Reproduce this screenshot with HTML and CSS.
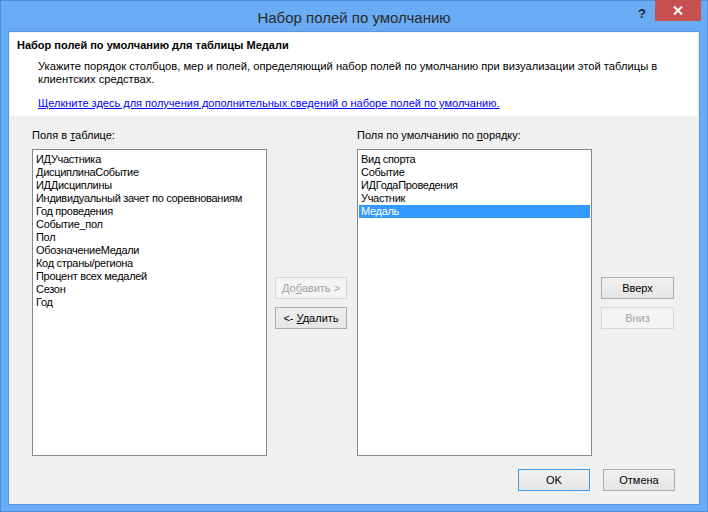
FILE: index.html
```html
<!DOCTYPE html>
<html lang="ru">
<head>
<meta charset="utf-8">
<title>Набор полей по умолчанию</title>
<link rel="stylesheet" href="styles.css">
</head>
<body>
<div class="window">
  <div class="titlebar">
    <div class="title">Набор полей по умолчанию</div>
    <div class="help">?</div>
    <div class="close"><svg width="10" height="9" viewBox="0 0 10 9"><path d="M1 0.5 L9 8.5 M9 0.5 L1 8.5" stroke="#fff" stroke-width="2"/></svg></div>
  </div>
  <div class="client">
    <div class="header">
      <div class="heading">Набор полей по умолчанию для таблицы Медали</div>
      <div class="desc">Укажите порядок столбцов, мер и полей, определяющий набор полей по умолчанию при визуализации этой таблицы в клиентских средствах.</div>
      <a class="link" href="#">Щелкните здесь для получения дополнительных сведений о наборе полей по умолчанию.</a>
    </div>
    <div class="main">
      <div class="col list-col">
        <div class="label">Поля в <u>т</u>аблице:</div>
        <div class="listbox">
          <div class="item">ИДУчастника</div>
          <div class="item">ДисциплинаСобытие</div>
          <div class="item">ИДДисциплины</div>
          <div class="item">Индивидуальный зачет по соревнованиям</div>
          <div class="item">Год проведения</div>
          <div class="item">Событие_пол</div>
          <div class="item">Пол</div>
          <div class="item">ОбозначениеМедали</div>
          <div class="item">Код страны/региона</div>
          <div class="item">Процент всех медалей</div>
          <div class="item">Сезон</div>
          <div class="item">Год</div>
        </div>
      </div>
      <div class="col btn-col mid">
        <div class="btn disabled"><span>До<u>б</u>авить &gt;</span></div>
        <div class="btn"><span>&lt;- <u>У</u>далить</span></div>
      </div>
      <div class="col list-col right">
        <div class="label">Поля по умолчанию по <u>п</u>орядку:</div>
        <div class="listbox">
          <div class="item">Вид спорта</div>
          <div class="item">Событие</div>
          <div class="item">ИДГодаПроведения</div>
          <div class="item">Участник</div>
          <div class="item selected">Медаль</div>
        </div>
      </div>
      <div class="col btn-col side">
        <div class="btn"><span>Вверх</span></div>
        <div class="btn disabled"><span>Вниз</span></div>
      </div>
    </div>
    <div class="footer">
      <div class="btn default"><span>OK</span></div>
      <div class="btn"><span>Отмена</span></div>
    </div>
  </div>
</div>
</body>
</html>
```
FILE: styles.css
```css
* { box-sizing: border-box; }
html, body { margin: 0; padding: 0; }
body {
  width: 708px;
  height: 512px;
  font-family: "Liberation Sans", Arial, sans-serif;
  font-size: 11px;
  color: #000;
  background: #fff;
}
.window {
  width: 708px;
  height: 512px;
  background: #6aacf3;
  border: 1px solid #4e8fd9;
  display: flex;
  flex-direction: column;
}
.titlebar {
  height: 30px;
  position: relative;
  display: flex;
  align-items: center;
  justify-content: center;
}
.title {
  font-size: 15px;
  color: #2b2b2b;
  margin-top: 2px;
}
.help {
  position: absolute;
  left: 637px;
  top: 5px;
  font-size: 13px;
  font-weight: bold;
  color: #222;
}
.close {
  position: absolute;
  left: 654px;
  top: -1px;
  width: 46px;
  height: 21px;
  background: #c75050;
  display: flex;
  align-items: center;
  justify-content: center;
}
.client {
  margin: 0 7px;
  height: 474px;
  background: #f0f0f0;
  border: 1px solid #5b97dd;
  padding: 1px 2px 0 1px;
  display: flex;
  flex-direction: column;
}
.header {
  background: #fff;
  height: 83px;
  padding: 5px 0 0 7px;
}
.heading {
  font-weight: bold;
  font-size: 11px;
  line-height: 14px;
}
.desc {
  margin: 8px 30px 0 21px;
  line-height: 13px;
  font-size: 11.2px;
}
.link {
  display: block;
  margin: 11px 0 0 21px;
  color: #0000ff;
  text-decoration: underline;
  line-height: 13px;
}
.main {
  display: flex;
  padding: 12px 0 0 22px;
}
.col { display: flex; flex-direction: column; }
.list-col { width: 235px; }
.label {
  height: 21px;
  line-height: 14px;
}
.listbox {
  height: 307px;
  background: #fff;
  border: 1px solid #828790;
  padding: 3px 1px;
}
.item {
  height: 13px;
  line-height: 13px;
  padding-left: 2px;
  white-space: nowrap;
  letter-spacing: -0.3px;
}
.item.selected {
  background: #3399ff;
  color: #fff;
}
.btn-col {
  padding-top: 149px;
  gap: 8px;
}
.mid { width: 72px; margin: 0 10px 0 8px; }
.side { width: 73px; margin-left: 9px; }
.btn {
  height: 22px;
  border: 1px solid #acacac;
  background: linear-gradient(#f0f0f0, #e5e5e5);
  display: flex;
  align-items: center;
  justify-content: center;
  white-space: nowrap;
}
.btn span { white-space: pre; }
.btn.disabled {
  border-color: #d9d9d9;
  background: #f4f4f4;
  color: #a3a3a3;
}
.btn.default { border-color: #3c9be8; }
.footer {
  display: flex;
  justify-content: flex-end;
  gap: 13px;
  padding: 13px 22px 0 0;
}
.footer .btn { width: 72px; }
```
